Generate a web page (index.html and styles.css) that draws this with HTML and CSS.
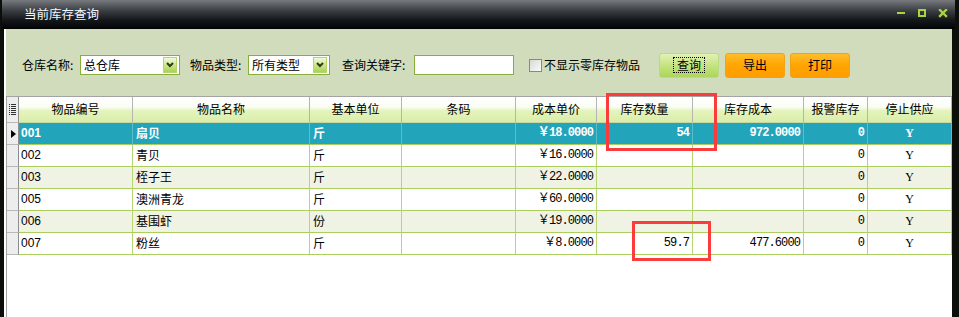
FILE: index.html
```html
<!DOCTYPE html>
<html lang="zh-CN">
<head>
    <meta charset="UTF-8">
    <title>当前库存查询</title>
    <link rel="stylesheet" href="styles.css">
</head>
<body>
<div class="window">
    <div class="titlebar">
        <span class="title">当前库存查询</span>
        <svg class="win-btns" width="51" height="9" viewBox="0 0 51 9">
            <rect x="0" y="3" width="8" height="2" fill="#a9d53c"/>
            <rect x="22" y="1" width="6" height="6" fill="none" stroke="#a9d53c" stroke-width="2"/>
            <path d="M43 1 L49 7 M49 1 L43 7" stroke="#a9d53c" stroke-width="2.4" stroke-linecap="square"/>
        </svg>
    </div>
    <div class="content">
        <!-- search bar -->
        <div class="toolbar">
            <span class="lbl lbl-store">仓库名称:</span>
            <div class="select sel-store">
                <span>总仓库</span>
                <i class="arrow"><svg width="8" height="6" viewBox="0 0 8 6"><path d="M1 1 L4 4 L7 1" fill="none" stroke="#2c3a10" stroke-width="2"/></svg></i>
            </div>
            <span class="lbl lbl-type">物品类型:</span>
            <div class="select sel-type">
                <span>所有类型</span>
                <i class="arrow"><svg width="8" height="6" viewBox="0 0 8 6"><path d="M1 1 L4 4 L7 1" fill="none" stroke="#2c3a10" stroke-width="2"/></svg></i>
            </div>
            <span class="lbl lbl-key">查询关键字:</span>
            <div class="input"></div>
            <span class="check"></span>
            <span class="check-text">不显示零库存物品</span>
            <button class="btn btn-green"><span class="focus">查询</span></button>
            <button class="btn btn-orange btn-export">导出</button>
            <button class="btn btn-orange btn-print">打印</button>
        </div>
        <!-- stock grid -->
        <div class="grid">
            <div class="row head">
                <div class="cell ind"><svg width="7" height="11" viewBox="0 0 7 11">
                    <rect x="0" y="0" width="1" height="1" fill="#333"/><rect x="2" y="0" width="5" height="1" fill="#333"/>
                    <rect x="0" y="2" width="1" height="1" fill="#333"/><rect x="2" y="2" width="5" height="1" fill="#333"/>
                    <rect x="0" y="4" width="1" height="1" fill="#333"/><rect x="2" y="4" width="5" height="1" fill="#333"/>
                    <rect x="0" y="6" width="1" height="1" fill="#333"/><rect x="2" y="6" width="5" height="1" fill="#333"/>
                    <rect x="0" y="8" width="1" height="1" fill="#333"/><rect x="2" y="8" width="5" height="1" fill="#333"/>
                    <rect x="0" y="10" width="1" height="1" fill="#333"/><rect x="2" y="10" width="5" height="1" fill="#333"/>
                </svg></div>
                <div class="cell">物品编号</div>
                <div class="cell">物品名称</div>
                <div class="cell">基本单位</div>
                <div class="cell">条码</div>
                <div class="cell">成本单价</div>
                <div class="cell">库存数量</div>
                <div class="cell">库存成本</div>
                <div class="cell">报警库存</div>
                <div class="cell">停止供应</div>
            </div>
            <div class="row selected">
                <div class="cell ind"><i class="pointer"></i></div>
                <div class="cell code">001</div>
                <div class="cell">扇贝</div>
                <div class="cell">斤</div>
                <div class="cell"></div>
                <div class="cell num">￥18.0000</div>
                <div class="cell num">54</div>
                <div class="cell num">972.0000</div>
                <div class="cell num">0</div>
                <div class="cell flag">Y</div>
            </div>
            <div class="row">
                <div class="cell ind"></div>
                <div class="cell code">002</div>
                <div class="cell">青贝</div>
                <div class="cell">斤</div>
                <div class="cell"></div>
                <div class="cell num">￥16.0000</div>
                <div class="cell num"></div>
                <div class="cell num"></div>
                <div class="cell num">0</div>
                <div class="cell flag">Y</div>
            </div>
            <div class="row alt">
                <div class="cell ind"></div>
                <div class="cell code">003</div>
                <div class="cell">桎子王</div>
                <div class="cell">斤</div>
                <div class="cell"></div>
                <div class="cell num">￥22.0000</div>
                <div class="cell num"></div>
                <div class="cell num"></div>
                <div class="cell num">0</div>
                <div class="cell flag">Y</div>
            </div>
            <div class="row">
                <div class="cell ind"></div>
                <div class="cell code">005</div>
                <div class="cell">澳洲青龙</div>
                <div class="cell">斤</div>
                <div class="cell"></div>
                <div class="cell num">￥60.0000</div>
                <div class="cell num"></div>
                <div class="cell num"></div>
                <div class="cell num">0</div>
                <div class="cell flag">Y</div>
            </div>
            <div class="row alt">
                <div class="cell ind"></div>
                <div class="cell code">006</div>
                <div class="cell">基围虾</div>
                <div class="cell">份</div>
                <div class="cell"></div>
                <div class="cell num">￥19.0000</div>
                <div class="cell num"></div>
                <div class="cell num"></div>
                <div class="cell num">0</div>
                <div class="cell flag">Y</div>
            </div>
            <div class="row">
                <div class="cell ind"></div>
                <div class="cell code">007</div>
                <div class="cell">粉丝</div>
                <div class="cell">斤</div>
                <div class="cell"></div>
                <div class="cell num">￥8.0000</div>
                <div class="cell num">59.7</div>
                <div class="cell num">477.6000</div>
                <div class="cell num">0</div>
                <div class="cell flag">Y</div>
            </div>
        </div>
    </div>
    <!-- red annotation boxes -->
    <div class="mark mark-qty"></div>
    <div class="mark mark-last"></div>
</div>
</body>
</html>
```

FILE: styles.css
```css
body {
    margin: 0;
    background: #000;
    font-family: "Noto Sans CJK SC", "Liberation Sans", sans-serif;
    font-size: 12px;
    color: #000;
}
.window {
    position: relative;
    width: 959px;
    height: 317px;
    display: flex;
    flex-direction: column;
    background: #0b0e09;
    overflow: hidden;
}
.titlebar {
    height: 29px;
    margin: 0 4px 0 2px;
    display: flex;
    align-items: flex-start;
    background: linear-gradient(#777b7f 0%, #3d4145 35%, #15191c 68%, #010203 100%);
}
.title {
    margin: 5px 0 0 22px;
    line-height: 18px;
    font-size: 12.5px;
    color: #f2f6ff;
}
.win-btns {
    margin: 9px 7px 0 auto;
}
.content {
    flex: 1;
    margin: 0 7px 0 4px;
    background: #fff;
    display: flex;
    flex-direction: column;
}
.toolbar {
    height: 67px;
    box-sizing: border-box;
    padding: 5px 0 0 16px;
    display: flex;
    align-items: center;
    background: #d0dcbc;
    margin-left: 2px;
}
.lbl {
    line-height: 16px;
}
.lbl-store { width: 58px; }
.lbl-type { width: 58px; margin-left: 10px; }
.lbl-key { width: 72px; margin-left: 12px; }
.select {
    position: relative;
    height: 20px;
    box-sizing: border-box;
    border: 1px solid #8aae3c;
    background: #fff;
    line-height: 18px;
    padding-left: 3px;
}
.sel-store { width: 100px; }
.sel-type { width: 82px; }
.arrow {
    position: absolute;
    right: 2px;
    top: 1px;
    width: 14px;
    height: 16px;
    box-sizing: border-box;
    border: 1px solid #b4d46c;
    background: linear-gradient(#f2f9dc, #c6e48a 55%, #a9d257);
    display: flex;
    align-items: center;
    justify-content: center;
}
.input {
    width: 100px;
    height: 20px;
    box-sizing: border-box;
    border: 1px solid #8aae3c;
    background: #fff;
}
.check {
    width: 13px;
    height: 13px;
    box-sizing: border-box;
    margin-left: 15px;
    border: 1px solid #7c9c40;
    background: linear-gradient(135deg, #d8d8d4, #fbfbfa);
}
.check-text {
    width: 115px;
    margin-left: 2px;
    line-height: 16px;
}
.btn {
    width: 60px;
    height: 25px;
    padding: 0;
    border-radius: 3px;
    font-family: "Noto Sans CJK SC", sans-serif;
    font-size: 12px;
    color: #000;
    line-height: 20px;
}
.btn-green {
    border: 1px solid #bcd98a;
    background: linear-gradient(#e2f2b4, #c2e27c 55%, #acd55a);
}
.btn-orange {
    border: 1px solid #f0a218;
    background: linear-gradient(#ffbd2a, #ffa502 50%, #ff9d00);
}
.btn-export { margin-left: 6px; }
.btn-print { margin-left: 5px; }
.focus {
    display: inline-block;
    padding: 0 3px;
    line-height: 14px;
    border: 1px dotted #000;
}
.grid {
    flex: 1;
    border-top: 1px solid #a4a4a4;
    border-left: 1px solid #a4a4a4;
    margin-left: 2px;
}
.row {
    display: grid;
    grid-template-columns: 12px 114px 177px 92px 114px 81px 96px 111px 64px 84px;
    height: 22px;
}
.cell {
    box-sizing: border-box;
    border-right: 1px solid #b6d672;
    border-bottom: 1px solid #aacf5e;
    padding: 0 3px;
    line-height: 20px;
    white-space: nowrap;
    overflow: hidden;
}
.row.head {
    height: 26px;
}
.head .cell {
    text-align: center;
    line-height: 24px;
    border-right: 1px solid #b4b4b4;
    border-bottom: 1px solid #c4d8a0;
    background: linear-gradient(#ffffff 0%, #fbfdf4 40%, #e4f3bc 55%, #d9eeaa 100%);
}
.cell.ind {
    padding: 0;
    background: #ededed;
    border-right: 1px solid #8e8e8e;
    border-bottom: 1px solid #b8b8b8;
    display: flex;
    align-items: center;
    justify-content: center;
}
.pointer {
    width: 0;
    height: 0;
    margin-left: 1px;
    border-left: 5px solid #000;
    border-top: 4px solid transparent;
    border-bottom: 4px solid transparent;
}
.code {
    font-family: "Liberation Sans", sans-serif;
    padding-left: 2px;
}
.num {
    font-family: "Liberation Mono", "Noto Sans CJK SC", monospace;
    font-size: 12px;
    letter-spacing: -0.9px;
    text-align: right;
}
.flag {
    font-family: "Liberation Serif", serif;
    font-size: 12px;
    text-align: center;
}
.row.alt .cell {
    background: #f0f3e4;
}
.row.alt .cell.ind {
    background: #ededed;
}
.row.selected .cell {
    background: #22a4bb;
    color: #fff;
    font-weight: bold;
    border-right-color: #5bbccc;
}
.row.selected .cell.ind {
    background: #ededed;
    border-right-color: #8e8e8e;
}
.mark {
    position: absolute;
    box-sizing: border-box;
    border: 3px solid #fb3c3c;
}
.mark-qty {
    left: 606px;
    top: 93px;
    width: 111px;
    height: 58px;
}
.mark-last {
    left: 632px;
    top: 221px;
    width: 79px;
    height: 40px;
}
```
